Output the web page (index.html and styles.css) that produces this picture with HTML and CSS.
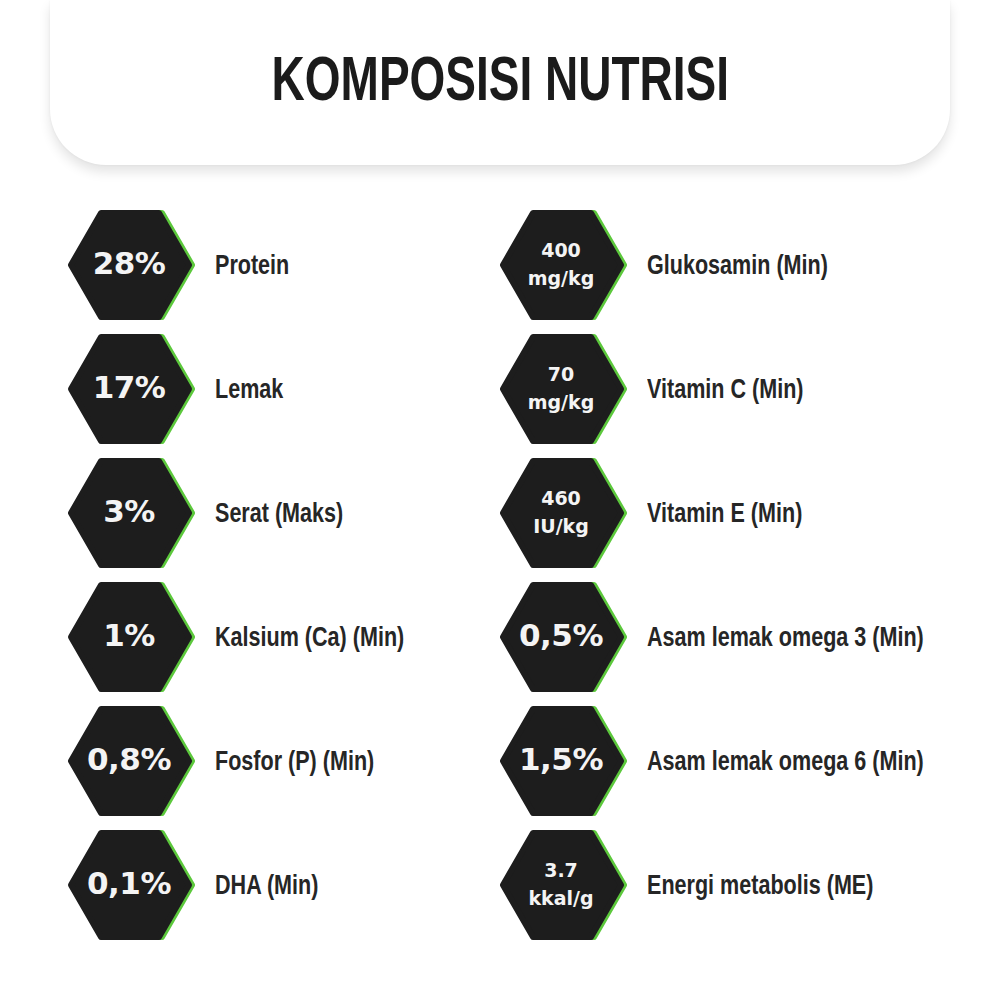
FILE: index.html
```html
<!DOCTYPE html>
<html lang="id">
<head>
<meta charset="utf-8">
<title>Komposisi Nutrisi</title>
<link rel="stylesheet" href="styles.css">
</head>
<body>
<header class="card">
  <h1 class="title"><span class="title-text">KOMPOSISI NUTRISI</span></h1>
</header>
<main class="columns">
  <section class="col">
    <div class="item">
      <div class="hex">
        <svg class="hex-bg" viewBox="0 0 128 112" width="128" height="112" aria-hidden="true"><polygon class="hex-green" points="7,56 37,4 95,4 125,56 95,108 37,108"/><polygon class="hex-black" points="4,56 34,4 92,4 122,56 92,108 34,108"/></svg>
        <div class="value">28%</div>
      </div>
      <div class="label"><span class="label-text">Protein</span></div>
    </div>
    <div class="item">
      <div class="hex">
        <svg class="hex-bg" viewBox="0 0 128 112" width="128" height="112" aria-hidden="true"><polygon class="hex-green" points="7,56 37,4 95,4 125,56 95,108 37,108"/><polygon class="hex-black" points="4,56 34,4 92,4 122,56 92,108 34,108"/></svg>
        <div class="value">17%</div>
      </div>
      <div class="label"><span class="label-text">Lemak</span></div>
    </div>
    <div class="item">
      <div class="hex">
        <svg class="hex-bg" viewBox="0 0 128 112" width="128" height="112" aria-hidden="true"><polygon class="hex-green" points="7,56 37,4 95,4 125,56 95,108 37,108"/><polygon class="hex-black" points="4,56 34,4 92,4 122,56 92,108 34,108"/></svg>
        <div class="value">3%</div>
      </div>
      <div class="label"><span class="label-text">Serat (Maks)</span></div>
    </div>
    <div class="item">
      <div class="hex">
        <svg class="hex-bg" viewBox="0 0 128 112" width="128" height="112" aria-hidden="true"><polygon class="hex-green" points="7,56 37,4 95,4 125,56 95,108 37,108"/><polygon class="hex-black" points="4,56 34,4 92,4 122,56 92,108 34,108"/></svg>
        <div class="value">1%</div>
      </div>
      <div class="label"><span class="label-text">Kalsium (Ca) (Min)</span></div>
    </div>
    <div class="item">
      <div class="hex">
        <svg class="hex-bg" viewBox="0 0 128 112" width="128" height="112" aria-hidden="true"><polygon class="hex-green" points="7,56 37,4 95,4 125,56 95,108 37,108"/><polygon class="hex-black" points="4,56 34,4 92,4 122,56 92,108 34,108"/></svg>
        <div class="value">0,8%</div>
      </div>
      <div class="label"><span class="label-text">Fosfor (P) (Min)</span></div>
    </div>
    <div class="item">
      <div class="hex">
        <svg class="hex-bg" viewBox="0 0 128 112" width="128" height="112" aria-hidden="true"><polygon class="hex-green" points="7,56 37,4 95,4 125,56 95,108 37,108"/><polygon class="hex-black" points="4,56 34,4 92,4 122,56 92,108 34,108"/></svg>
        <div class="value">0,1%</div>
      </div>
      <div class="label"><span class="label-text">DHA (Min)</span></div>
    </div>
  </section>
  <section class="col">
    <div class="item">
      <div class="hex">
        <svg class="hex-bg" viewBox="0 0 128 112" width="128" height="112" aria-hidden="true"><polygon class="hex-green" points="7,56 37,4 95,4 125,56 95,108 37,108"/><polygon class="hex-black" points="4,56 34,4 92,4 122,56 92,108 34,108"/></svg>
        <div class="value small">400<br>mg/kg</div>
      </div>
      <div class="label"><span class="label-text">Glukosamin (Min)</span></div>
    </div>
    <div class="item">
      <div class="hex">
        <svg class="hex-bg" viewBox="0 0 128 112" width="128" height="112" aria-hidden="true"><polygon class="hex-green" points="7,56 37,4 95,4 125,56 95,108 37,108"/><polygon class="hex-black" points="4,56 34,4 92,4 122,56 92,108 34,108"/></svg>
        <div class="value small">70<br>mg/kg</div>
      </div>
      <div class="label"><span class="label-text">Vitamin C (Min)</span></div>
    </div>
    <div class="item">
      <div class="hex">
        <svg class="hex-bg" viewBox="0 0 128 112" width="128" height="112" aria-hidden="true"><polygon class="hex-green" points="7,56 37,4 95,4 125,56 95,108 37,108"/><polygon class="hex-black" points="4,56 34,4 92,4 122,56 92,108 34,108"/></svg>
        <div class="value small">460<br>IU/kg</div>
      </div>
      <div class="label"><span class="label-text">Vitamin E (Min)</span></div>
    </div>
    <div class="item">
      <div class="hex">
        <svg class="hex-bg" viewBox="0 0 128 112" width="128" height="112" aria-hidden="true"><polygon class="hex-green" points="7,56 37,4 95,4 125,56 95,108 37,108"/><polygon class="hex-black" points="4,56 34,4 92,4 122,56 92,108 34,108"/></svg>
        <div class="value">0,5%</div>
      </div>
      <div class="label"><span class="label-text">Asam lemak omega 3 (Min)</span></div>
    </div>
    <div class="item">
      <div class="hex">
        <svg class="hex-bg" viewBox="0 0 128 112" width="128" height="112" aria-hidden="true"><polygon class="hex-green" points="7,56 37,4 95,4 125,56 95,108 37,108"/><polygon class="hex-black" points="4,56 34,4 92,4 122,56 92,108 34,108"/></svg>
        <div class="value">1,5%</div>
      </div>
      <div class="label"><span class="label-text">Asam lemak omega 6 (Min)</span></div>
    </div>
    <div class="item">
      <div class="hex">
        <svg class="hex-bg" viewBox="0 0 128 112" width="128" height="112" aria-hidden="true"><polygon class="hex-green" points="7,56 37,4 95,4 125,56 95,108 37,108"/><polygon class="hex-black" points="4,56 34,4 92,4 122,56 92,108 34,108"/></svg>
        <div class="value small">3.7<br>kkal/g</div>
      </div>
      <div class="label"><span class="label-text">Energi metabolis (ME)</span></div>
    </div>
  </section>
</main>
</body>
</html>
```

FILE: styles.css
```css
html, body {
  margin: 0;
  padding: 0;
  background: #ffffff;
}

body {
  width: 1000px;
  height: 1000px;
  overflow: hidden;
  font-family: "Liberation Sans", Arial, sans-serif;
}

.card {
  margin: 0 50px;
  height: 165px;
  box-sizing: border-box;
  padding-top: 47px;
  background: #ffffff;
  border-radius: 0 0 56px 56px;
  box-shadow: 0 7px 12px rgba(0, 0, 0, 0.11), 0 0 3px rgba(0, 0, 0, 0.05);
}

.title {
  margin: 0;
  text-align: center;
  font-size: 63px;
  line-height: 63px;
  font-weight: 700;
  color: #1b1b1b;
}

.title-text {
  display: inline-block;
  transform: scaleX(0.73);
  transform-origin: center;
  white-space: nowrap;
}

.columns {
  display: flex;
  padding: 44px 0 0 67px;
}

.col {
  width: 432px;
  display: flex;
  flex-direction: column;
  gap: 12px;
}

.item {
  display: flex;
  align-items: center;
  gap: 20px;
}

.hex {
  display: grid;
  width: 128px;
  height: 112px;
  flex: none;
}

.hex > * {
  grid-area: 1 / 1;
}

.hex-bg {
  display: block;
}

.hex-green {
  fill: #5cc83c;
  stroke: #5cc83c;
  stroke-width: 6;
  stroke-linejoin: round;
}

.hex-black {
  fill: #1d1d1d;
  stroke: #1d1d1d;
  stroke-width: 6;
  stroke-linejoin: round;
}

.value {
  align-self: center;
  justify-self: center;
  margin: 0 4px 4px 0;
  font-family: "DejaVu Sans", sans-serif;
  font-weight: 700;
  font-size: 31px;
  line-height: 1;
  letter-spacing: -0.5px;
  color: #f4f4f4;
  text-align: center;
  white-space: nowrap;
}

.value.small {
  font-size: 19px;
  line-height: 28px;
  letter-spacing: 0;
  margin: 0 4px 2px 0;
}

.label {
  font-size: 28px;
  line-height: 32px;
  font-weight: 700;
  color: #262626;
  white-space: nowrap;
}

.label-text {
  display: inline-block;
  transform: scaleX(0.77);
  transform-origin: left center;
}
```
